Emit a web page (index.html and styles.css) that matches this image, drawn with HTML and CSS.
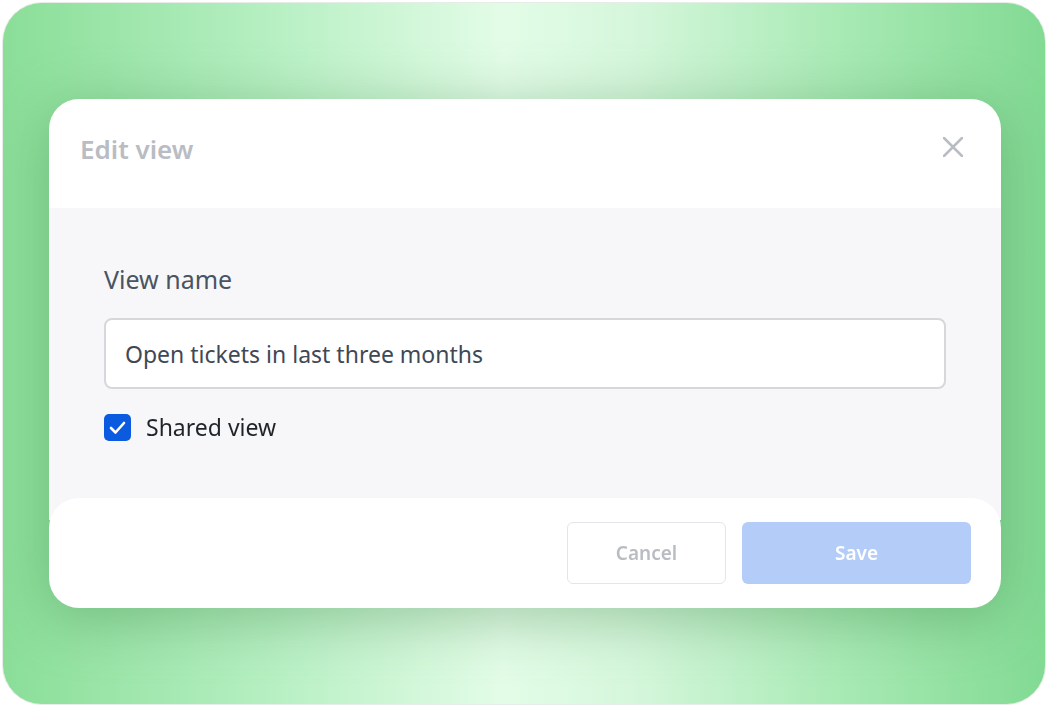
FILE: index.html
```html
<!DOCTYPE html>
<html>
<head>
<meta charset="utf-8">
<link rel="stylesheet" href="styles.css">
</head>
<body>
<div class="frame">
  <div class="dialog">
    <div class="dialog-header">
      <h2 class="title">Edit view</h2>
      <button class="close" aria-label="Close">
        <svg width="20" height="20" viewBox="0 0 20 20"><path d="M1 1L19 19M19 1L1 19" stroke="#b9bcc3" stroke-width="2.5" stroke-linecap="round"/></svg>
      </button>
    </div>
    <div class="dialog-body">
      <label class="label">View name</label>
      <div class="input">Open tickets in last three months</div>
      <div class="check-row">
        <span class="checkbox">
          <svg width="27" height="27" viewBox="0 0 27 27"><path d="M7 14L11.5 18.5L20 9" fill="none" stroke="#fff" stroke-width="2.6" stroke-linecap="round" stroke-linejoin="round"/></svg>
        </span>
        <span class="check-label">Shared view</span>
      </div>
    </div>
    <div class="dialog-footer">
      <button class="btn btn-cancel">Cancel</button>
      <button class="btn btn-save">Save</button>
    </div>
  </div>
</div>
</body>
</html>
```
FILE: styles.css
```css
* { box-sizing: border-box; }
html, body { margin: 0; padding: 0; background: #ffffff; }
body { font-family: "Noto Sans", "Lato", sans-serif; }

.frame {
  margin: 2px;
  width: 1044px;
  height: 703px;
  border: 1px solid #e6ece7;
  border-radius: 40px;
  background: linear-gradient(90deg, #8ade98 0%, #b5efc1 25%, #e3fce7 48%, #d6f7dc 60%, #a9eab5 80%, #82da93 100%);
  padding: 96px 0 0 46px;
  overflow: hidden;
}

.dialog {
  width: 952px;
  display: flex;
  flex-direction: column;
  filter: drop-shadow(0 10px 30px rgba(40, 110, 50, 0.35));
}

.dialog-header {
  height: 109px;
  background: #fff;
  border-radius: 30px 30px 0 0;
  display: flex;
  justify-content: space-between;
  align-items: flex-start;
  padding: 34px 38px 0 31px;
}

.title {
  margin: 0;
  font-size: 26px;
  font-weight: 600;
  color: #b9bcc3;
  line-height: 32px;
}

.close {
  border: 0;
  background: none;
  padding: 0;
  margin-top: 4px;
  width: 20px;
  height: 20px;
  display: flex;
}

.dialog-body {
  background: #f7f7f9;
  padding: 55px 55px 79px 55px;
  display: flex;
  flex-direction: column;
}

.label {
  font-size: 25px;
  line-height: 32px;
  color: #4a5361;
}

.input {
  margin-top: 23px;
  height: 71px;
  background: #fff;
  border: 2px solid #d6d7db;
  border-radius: 8px;
  display: flex;
  align-items: center;
  padding-left: 19px;
  font-size: 23px;
  color: #3f4856;
}

.check-row {
  margin-top: 25px;
  display: flex;
  align-items: center;
  gap: 15px;
}

.checkbox {
  width: 27px;
  height: 27px;
  border-radius: 5px;
  background: #0b5be0;
  display: flex;
}

.check-label {
  font-size: 23px;
  line-height: 27px;
  color: #1f242b;
}

.dialog-footer {
  margin-top: -22px;
  height: 110px;
  background: #fff;
  border-radius: 30px;
  display: flex;
  justify-content: flex-end;
  align-items: center;
  gap: 16px;
  padding: 0 30px;
}

.btn {
  height: 62px;
  border-radius: 6px;
  font-family: inherit;
  font-size: 19px;
  font-weight: 600;
}

.btn-cancel {
  width: 159px;
  background: #fff;
  border: 1.5px solid #e3e5ea;
  color: #b9bcc3;
}

.btn-save {
  width: 229px;
  background: #b3cdf8;
  border: 0;
  color: #fff;
}
```
